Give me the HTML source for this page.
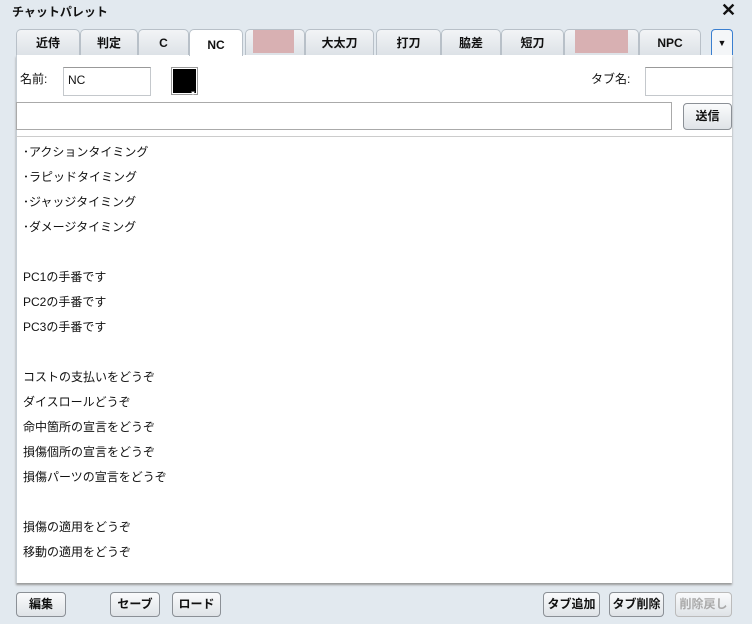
<!DOCTYPE html><html><head><meta charset="utf-8"><style>
*{box-sizing:border-box;margin:0;padding:0}
body{width:752px;height:624px;background:#e2e9ef;font-family:"Liberation Sans","Noto Sans CJK JP",sans-serif;font-size:12px;color:#111;position:relative;overflow:hidden}
.a{position:absolute}
.title{left:12px;top:3px;font-weight:bold;font-size:12px}
.x{left:721px;top:0px;font-size:18px;font-weight:bold}
.tab{position:absolute;top:29px;height:26px;border:1px solid #b8c0c8;border-bottom:none;border-radius:5px 5px 0 0;background:linear-gradient(#f2f4f6,#dde2e7);font-weight:bold;font-size:12px;text-align:center;line-height:26px}
.tab.act{background:#fff;top:29px;height:27px;line-height:30px;z-index:2}
.pink{position:absolute;top:0;height:23px;background:#d8b0b2}
.panel{left:16px;top:55px;width:716px;height:528px;background:#fff;border-left:1px solid #c5cdd4;box-shadow:0 2px 2px #999}
.inp{position:absolute;background:#fff;border:1px solid #c4c8cc;border-top-color:#999}
.btn{position:absolute;top:592px;height:25px;border:1px solid #8b9096;border-radius:4px;background:linear-gradient(#fafbfc,#dfe3e7);font-size:12px;font-weight:bold;text-align:center;line-height:23px}
.list div{position:absolute;left:23px;font-size:12px}
</style></head><body>
<div class="a title">チャットパレット</div>
<div class="a x">✕</div>
<div class="tab" style="left:16px;width:64px">近侍</div>
<div class="tab" style="left:80px;width:58px">判定</div>
<div class="tab" style="left:138px;width:51px">C</div>
<div class="tab act" style="left:189px;width:54px">NC</div>
<div class="tab" style="left:245px;width:60px"><div class="pink" style="left:7px;width:41px;top:0"></div></div>
<div class="tab" style="left:305px;width:69px">大太刀</div>
<div class="tab" style="left:376px;width:65px">打刀</div>
<div class="tab" style="left:441px;width:60px">脇差</div>
<div class="tab" style="left:501px;width:63px">短刀</div>
<div class="tab" style="left:564px;width:75px"><div class="pink" style="left:10px;width:53px"></div></div>
<div class="tab" style="left:639px;width:62px">NPC</div>
<div class="a" style="left:711px;top:29px;width:22px;height:26px;border:1px solid #3a7fd0;border-bottom:none;border-radius:4px 4px 0 0;background:#f4f6f8;text-align:center;font-size:9px;line-height:26px">▼</div>
<div class="a panel"></div>
<div class="a" style="left:20px;top:70px">名前:</div>
<div class="inp" style="left:63px;top:67px;width:88px;height:29px;padding:5px 4px">NC</div>
<div class="a" style="left:171px;top:67px;width:27px;height:28px;border:1px solid #999;background:#000;box-shadow:inset 0 0 0 1px #fff"><span style="position:absolute;right:1px;bottom:-3px;color:#fff;font-size:6px">▼</span></div>
<div class="a" style="left:591px;top:70px">タブ名:</div>
<div class="inp" style="left:645px;top:67px;width:88px;height:29px"></div>
<div class="inp" style="left:16px;top:102px;width:656px;height:28px;border:1px solid #aaa"></div>
<div class="btn" style="left:683px;top:103px;width:49px;height:27px;line-height:25px">送信</div>
<div class="a" style="left:16px;top:136px;width:716px;height:1px;background:#ccc"></div>
<div class="list">
<div style="top:143px">･アクションタイミング</div>
<div style="top:168px">･ラピッドタイミング</div>
<div style="top:193px">･ジャッジタイミング</div>
<div style="top:218px">･ダメージタイミング</div>
<div style="top:268px">PC1の手番です</div>
<div style="top:293px">PC2の手番です</div>
<div style="top:318px">PC3の手番です</div>
<div style="top:368px">コストの支払いをどうぞ</div>
<div style="top:393px">ダイスロールどうぞ</div>
<div style="top:418px">命中箇所の宣言をどうぞ</div>
<div style="top:443px">損傷個所の宣言をどうぞ</div>
<div style="top:468px">損傷パーツの宣言をどうぞ</div>
<div style="top:518px">損傷の適用をどうぞ</div>
<div style="top:543px">移動の適用をどうぞ</div>
</div>
<div class="btn" style="left:16px;width:50px">編集</div>
<div class="btn" style="left:110px;width:50px">セーブ</div>
<div class="btn" style="left:172px;width:49px">ロード</div>
<div class="btn" style="left:543px;width:57px">タブ追加</div>
<div class="btn" style="left:609px;width:55px">タブ削除</div>
<div class="btn" style="left:675px;width:57px;color:#aaa;border-color:#bbb">削除戻し</div>
</body></html>
